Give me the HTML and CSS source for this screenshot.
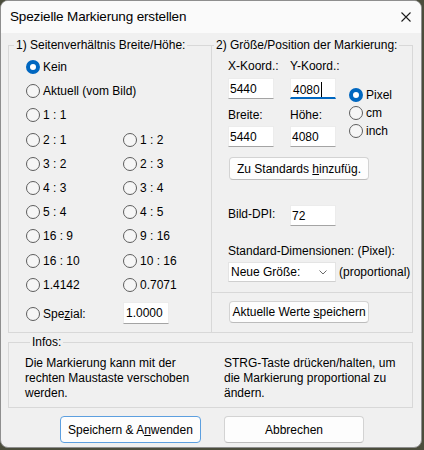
FILE: index.html
```html
<!DOCTYPE html>
<html lang="de">
<head>
<meta charset="utf-8">
<title>Spezielle Markierung erstellen</title>
<link rel="stylesheet" href="styles.css">
</head>
<body>
<div class="window">
  <div class="titlebar">
    <span class="title">Spezielle Markierung erstellen</span>
    <span class="close"><svg width="10" height="10" viewBox="0 0 10 10"><path d="M0.5 0.5L9.5 9.5M9.5 0.5L0.5 9.5" stroke="#1c1c1c" stroke-width="1.1" fill="none"/></svg></span>
  </div>
  <div class="content">
    <div class="groups">
      <fieldset class="group g1">
        <legend>1) Seitenverhältnis Breite/Höhe:</legend>
        <div class="ratios">
          <div class="opt wide"><span class="radio on"></span><span>Kein</span></div>
          <div class="opt wide"><span class="radio"></span><span>Aktuell (vom Bild)</span></div>
          <div class="opt wide"><span class="radio"></span><span>1 : 1</span></div>
          <div class="opt"><span class="radio"></span><span>2 : 1</span></div>
          <div class="opt"><span class="radio"></span><span>1 : 2</span></div>
          <div class="opt"><span class="radio"></span><span>3 : 2</span></div>
          <div class="opt"><span class="radio"></span><span>2 : 3</span></div>
          <div class="opt"><span class="radio"></span><span>4 : 3</span></div>
          <div class="opt"><span class="radio"></span><span>3 : 4</span></div>
          <div class="opt"><span class="radio"></span><span>5 : 4</span></div>
          <div class="opt"><span class="radio"></span><span>4 : 5</span></div>
          <div class="opt"><span class="radio"></span><span>16 : 9</span></div>
          <div class="opt"><span class="radio"></span><span>9 : 16</span></div>
          <div class="opt"><span class="radio"></span><span>16 : 10</span></div>
          <div class="opt"><span class="radio"></span><span>10 : 16</span></div>
          <div class="opt"><span class="radio"></span><span>1.4142</span></div>
          <div class="opt"><span class="radio"></span><span>0.7071</span></div>
        </div>
        <div class="special">
          <div class="opt special-label"><span class="radio"></span><span>Spe<u>z</u>ial:</span></div>
          <div class="edit edit-special">1.0000</div>
        </div>
      </fieldset>
      <fieldset class="group g2">
        <legend>2) Größe/Position der Markierung:</legend>
        <div class="coords">
          <div class="lbl c1 r1">X-Koord.:</div>
          <div class="lbl c2 r1">Y-Koord.:</div>
          <div class="edit c1 r2">5440</div>
          <div class="edit focus c2 r2">4080<span class="caret"></span></div>
          <div class="units">
            <div class="opt unit"><span class="radio on"></span><span>Pixel</span></div>
            <div class="opt unit"><span class="radio"></span><span>cm</span></div>
            <div class="opt unit"><span class="radio"></span><span>inch</span></div>
          </div>
          <div class="lbl c1 r3">Breite:</div>
          <div class="lbl c2 r3">Höhe:</div>
          <div class="edit c1 r4">5440</div>
          <div class="edit c2 r4">4080</div>
        </div>
        <div class="btn btn-std"><span>Zu Standards <u>h</u>inzufüg.</span></div>
        <div class="dpi">
          <div class="lbl dpi-lbl">Bild-DPI:</div>
          <div class="edit">72</div>
        </div>
        <div class="lbl std-lbl">Standard-Dimensionen: (Pixel):</div>
        <div class="select-row">
          <div class="select"><span>Neue Größe:</span><svg width="8" height="5" viewBox="0 0 8 5"><path d="M0.5 0.5L4 4L7.5 0.5" stroke="#6a6a6a" stroke-width="1" fill="none"/></svg></div>
          <span class="prop">(proportional)</span>
        </div>
        <div class="sep"></div>
        <div class="btn btn-save"><span>Aktuelle Werte <u>s</u>peichern</span></div>
      </fieldset>
    </div>
    <fieldset class="group infos">
      <legend>Infos:</legend>
      <div class="info-text">
        <p>Die Markierung kann mit der<br>rechten Maustaste verschoben<br>werden.</p>
        <p>STRG-Taste drücken/halten, um<br>die Markierung proportional zu<br>ändern.</p>
      </div>
    </fieldset>
    <div class="buttons">
      <div class="btn btn-default"><span>Speichern &amp; A<u>n</u>wenden</span></div>
      <div class="btn btn-cancel"><span>Abbrechen</span></div>
    </div>
  </div>
</div>
</body>
</html>
```

FILE: styles.css
```css
html, body {
  margin: 0;
  padding: 0;
}

body {
  width: 424px;
  height: 450px;
  overflow: hidden;
  background: #4b4d3c;
  font-family: "Liberation Sans", Arial, sans-serif;
  font-size: 12px;
  line-height: 14px;
  color: #000;
}

.window {
  width: 420px;
  height: 446px;
  border: 1px solid #8e8e8e;
  border-radius: 8px;
  background: #f0f0f0;
  overflow: hidden;
  display: flex;
  flex-direction: column;
}

.titlebar {
  height: 32px;
  flex: none;
  background: #fafafa;
  display: flex;
  align-items: center;
  padding-left: 9px;
}

.title {
  font-size: 13.5px;
  letter-spacing: -0.15px;
  line-height: 16px;
  color: #000;
}

.close {
  margin-left: auto;
  width: 31px;
  display: flex;
  justify-content: center;
  align-items: center;
}

.close svg {
  display: block;
}

.content {
  padding: 5px 8px 0 7px;
}

.groups {
  display: flex;
  align-items: stretch;
}

fieldset.group {
  margin: 0;
  padding: 0;
  min-width: 0;
  border: 1px solid #d8d8d8;
}

fieldset.group legend {
  padding: 0 2px;
  margin-left: 5px;
  line-height: 14px;
}

.g1 {
  width: 203px;
  box-sizing: border-box;
  border-right: none !important;
  padding-bottom: 8px !important;
}

.g2 {
  flex: 1;
  padding-bottom: 9px !important;
}

.g2 legend {
  margin-left: 2px !important;
}

.ratios {
  display: grid;
  grid-template-columns: 97px 1fr;
  grid-auto-rows: 24.2px;
  padding: 3px 0 0 17px;
}

.opt {
  display: flex;
  align-items: center;
  white-space: nowrap;
}

.wide {
  grid-column: 1 / -1;
}

.radio {
  flex: none;
  width: 12px;
  height: 12px;
  border: 1px solid #5e5e5e;
  border-radius: 50%;
  background: #f6f6f6;
  margin-right: 3px;
}

.radio.on {
  width: 6px;
  height: 6px;
  border: 4px solid #0067c0;
  background: #ffffff;
}

.special {
  display: flex;
  align-items: center;
  height: 22px;
  margin-top: 5px;
  padding-left: 17px;
}

.special-label {
  width: 97px;
  margin-top: 3px;
}

.edit {
  box-sizing: border-box;
  width: 46px;
  height: 21px;
  background: #ffffff;
  border: 1px solid #ececec;
  border-bottom-color: #a4a4a4;
  padding: 3px 0 0 1px;
  white-space: nowrap;
}

.edit-special {
  height: 22px;
  padding-left: 2px;
}

.edit.focus {
  border-bottom: 2px solid #0067c0;
  padding-left: 2px;
}

.caret {
  display: inline-block;
  width: 1px;
  height: 15px;
  background: #000;
  vertical-align: -3px;
  margin-left: 1px;
}

.coords {
  display: grid;
  grid-template-columns: 62px 59px auto;
  grid-template-rows: 19px 30px 18px 21px;
  align-items: start;
  margin: 7px 0 0 16px;
}

.c1 { grid-column: 1; }
.c2 { grid-column: 2; }
.r1 { grid-row: 1; }
.r2 { grid-row: 2; }
.r3 { grid-row: 3; }
.r4 { grid-row: 4; }

.units {
  grid-column: 3;
  grid-row: 2 / 5;
  padding-top: 8px;
  display: flex;
  flex-direction: column;
}

.unit {
  height: 18px;
}

.btn {
  box-sizing: border-box;
  display: flex;
  align-items: center;
  justify-content: center;
  background: #fdfdfd;
  border: 1px solid #d3d3d3;
  border-bottom-color: #bcbcbc;
  border-radius: 4px;
  white-space: nowrap;
}

.btn-std {
  width: 140px;
  height: 23px;
  margin: 10px 0 0 17px;
}

.dpi {
  display: flex;
  align-items: flex-start;
  margin: 25px 0 0 16px;
}

.dpi-lbl {
  width: 62px;
  padding-top: 2px;
}

.std-lbl {
  margin: 18px 0 0 16px;
}

.select-row {
  display: flex;
  align-items: center;
  margin: 4px 0 0 16px;
}

.select {
  box-sizing: border-box;
  width: 108px;
  height: 20px;
  background: #ffffff;
  border: 1px solid #e4e4e4;
  border-bottom-color: #cfcfcf;
  display: flex;
  align-items: center;
  justify-content: space-between;
  padding: 0 8px 0 2px;
}

.select svg {
  display: block;
}

.prop {
  margin-left: 3px;
}

.sep {
  height: 1px;
  background: #d8d8d8;
  margin-top: 10px;
}

.btn-save {
  width: 140px;
  height: 22px;
  margin: 8px 0 0 17px;
}

.infos {
  margin-top: 2px !important;
  padding: 0 0 6px 16px !important;
}

.info-text {
  display: grid;
  grid-template-columns: 199px 1fr;
  padding-top: 7px;
  line-height: 15px;
}

.info-text p {
  margin: 0;
  white-space: nowrap;
}

.buttons {
  display: flex;
  justify-content: center;
  gap: 23px;
  margin-top: 8px;
  padding-left: 3px;
}

.btn-default {
  width: 141px;
  height: 27px;
  border-color: #5c9fdf;
}

.btn-cancel {
  width: 140px;
  height: 27px;
}
```
